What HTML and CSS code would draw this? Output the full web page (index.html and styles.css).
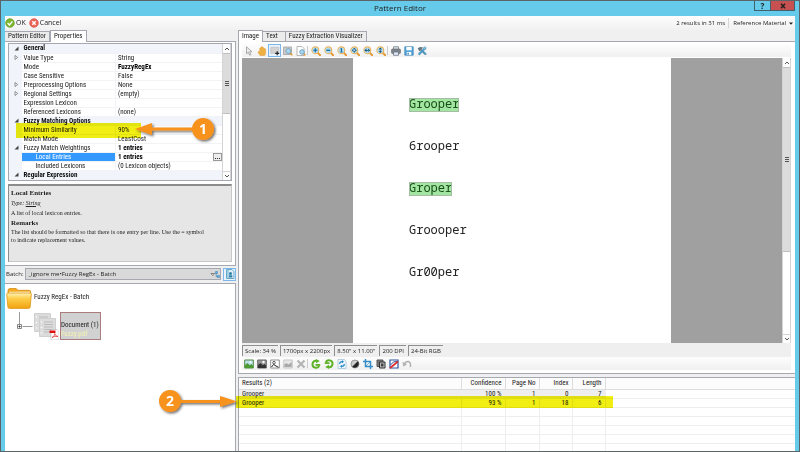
FILE: index.html
```html
<!DOCTYPE html>
<html lang="en">
<head>
<meta charset="utf-8">
<title>Pattern Editor</title>
<link rel="stylesheet" href="styles.css">
</head>
<body>
<svg class="defs" aria-hidden="true">
  <defs>
    <linearGradient id="folderFill" x1="0" y1="0" x2="0" y2="1"><stop offset="0" stop-color="#fff3b8"/><stop offset=".35" stop-color="#fdce4a"/><stop offset="1" stop-color="#f2a312"/></linearGradient>
    <filter id="shade" x="-20%" y="-40%" width="150%" height="200%"><feDropShadow dx="1.5" dy="1.5" stdDeviation="0.8" flood-color="#222" flood-opacity=".65"/></filter>
  </defs>
  <symbol id="lens" viewBox="0 0 10 10">
    <path d="M6.6 6.6 9.2 9.2" stroke="#e39a35" stroke-width="2" stroke-linecap="round"/>
    <circle cx="4.3" cy="4.3" r="3.4" fill="#d3ecf8" stroke="#e8b45c" stroke-width="1.1"/>
    <circle cx="4.3" cy="4.3" r="2.6" fill="#a9d6ee"/>
  </symbol>
  <symbol id="page" viewBox="0 0 17 19">
    <path d="M.5.5h16v18H.5z" fill="#dcdcdc" stroke="#d0d0d0"/>
    <path d="M5 4h9M5 6.500h9M5 9h9M5 11.500h9M5 14h6" stroke="#bcbcbc"/>
    <circle cx="2.500" cy="4" r=".8" fill="#fff"/><circle cx="2.500" cy="9.500" r=".8" fill="#fff"/><circle cx="2.500" cy="15" r=".8" fill="#fff"/>
  </symbol>
</svg>

<div class="window">
  <header class="titlebar">
    <h1>Pattern Editor</h1>
    <div class="caption-buttons">
      <button class="caption help" type="button">?</button>
      <button class="caption close" type="button" aria-label="Close"><svg viewBox="0 0 6 6"><path d="M1 .7 5 5.300M5 .7 1 5.300" stroke="#222" stroke-width="1.500"/></svg></button>
    </div>
  </header>

  <div class="client">
    <div class="commands">
      <button class="command" type="button"><svg viewBox="0 0 10 10"><circle cx="5" cy="5" r="4.300" fill="#7db72f" stroke="#5c981c" stroke-width=".7"/><path d="M2.600 5 4.400 6.900 7.500 3.400" fill="none" stroke="#fff" stroke-width="1.400"/></svg>OK</button>
      <button class="command" type="button"><svg viewBox="0 0 10 10"><circle cx="5" cy="5" r="4.300" fill="#ed6558" stroke="#d84d42" stroke-width=".7"/><path d="M3.300 3.300 6.700 6.700M6.700 3.300 3.300 6.700" stroke="#fff" stroke-width="1.400"/></svg>Cancel</button>
      <span class="timing">2 results in 31 ms</span>
      <button class="command reference" type="button">Reference Material <svg class="caret" viewBox="0 0 4 3"><path d="M0 .5h4L2 2.700z" fill="#222"/></svg></button>
    </div>

    <div class="panes">
      <section class="left">
        <nav class="tabs">
          <button class="tab" type="button">Pattern Editor</button>
          <button class="tab active" type="button">Properties</button>
        </nav>
        <div class="properties-page">
          <div class="grid-box">
            <table class="properties">
              <colgroup><col class="mark-column"><col class="label-column"><col></colgroup>
              <tr class="category"><td class="mark"><svg viewBox="0 0 5 5"><path d="M4.500.5v4h-4z" fill="#444"/></svg></td><th colspan="2">General</th></tr>
              <tr><td class="mark"><svg viewBox="0 0 5 5"><path d="M1 .5 3.700 2.500 1 4.500z" fill="#fff" stroke="#666" stroke-width=".7"/></svg></td><th>Value Type</th><td>String</td></tr>
              <tr><td class="mark"></td><th>Mode</th><td class="set">FuzzyRegEx</td></tr>
              <tr><td class="mark"></td><th>Case Sensitive</th><td>False</td></tr>
              <tr><td class="mark"><svg viewBox="0 0 5 5"><path d="M1 .5 3.700 2.500 1 4.500z" fill="#fff" stroke="#666" stroke-width=".7"/></svg></td><th>Preprocessing Options</th><td>None</td></tr>
              <tr><td class="mark"><svg viewBox="0 0 5 5"><path d="M1 .5 3.700 2.500 1 4.500z" fill="#fff" stroke="#666" stroke-width=".7"/></svg></td><th>Regional Settings</th><td>(empty)</td></tr>
              <tr><td class="mark"></td><th>Expression Lexicon</th><td></td></tr>
              <tr><td class="mark"></td><th>Referenced Lexicons</th><td>(none)</td></tr>
              <tr class="category"><td class="mark"><svg viewBox="0 0 5 5"><path d="M4.500.5v4h-4z" fill="#444"/></svg></td><th colspan="2">Fuzzy Matching Options</th></tr>
              <tr><td class="mark"></td><th>Minimum Similarity</th><td>90%</td></tr>
              <tr><td class="mark"></td><th>Match Mode</th><td>LeastCost</td></tr>
              <tr><td class="mark"><svg viewBox="0 0 5 5"><path d="M4.500.5v4h-4z" fill="#444"/></svg></td><th>Fuzzy Match Weightings</th><td class="set">1 entries</td></tr>
              <tr><td class="mark"></td><th class="child selected">Local Entries</th><td class="set"><div class="value">1 entries <button class="browse" type="button">...</button></div></td></tr>
              <tr><td class="mark"></td><th class="child">Included Lexicons</th><td>(0 Lexicon objects)</td></tr>
              <tr class="category"><td class="mark"><svg viewBox="0 0 5 5"><path d="M4.500.5v4h-4z" fill="#444"/></svg></td><th colspan="2">Regular Expression</th></tr>
            </table>
            <div class="scrollbar">
              <span class="arrow"><svg viewBox="0 0 6 4"><path d="M1 3 3 1 5 3" fill="none" stroke="#555"/></svg></span>
              <span class="thumb upper"><svg viewBox="0 0 4 5"><path d="M0 .5h4M0 2.500h4M0 4.500h4" stroke="#555"/></svg></span>
              <span class="arrow down"><svg viewBox="0 0 6 4"><path d="M1 1 3 3 5 1" fill="none" stroke="#555"/></svg></span>
            </div>
            <div class="marker similarity"></div>
          </div>
          <div class="description">
            <h2>Local Entries</h2>
            <p class="type">Type: <u>String</u></p>
            <p>A list of local lexicon entries.</p>
            <h2>Remarks</h2>
            <p>The list should be formatted so that there is one entry per line. Use the = symbol to indicate replacement values.</p>
          </div>
        </div>
        <div class="batch">
          <label for="batch">Batch:</label>
          <div class="combo">
            <select id="batch"><option>_ignore me•Fuzzy RegEx - Batch</option></select>
            <svg class="combo-icon" viewBox="0 0 9 7"><path d="M.5 2.500h3.600L2.300 4.700z" fill="#fff" stroke="#555" stroke-width=".7"/><path d="M5 .5h2v2H5zM7 4.500h2v2H7z" fill="#65aede" stroke="#2e7fb5" stroke-width=".5"/><path d="M5.700 2.500v3.200H7" fill="none" stroke="#2e7fb5" stroke-width=".7"/></svg>
          </div>
          <button class="tool checked" type="button" aria-label="View batch"><svg viewBox="0 0 10 10"><path d="M1.500.5H7l2 2v7H1.500z" fill="#ddeef7" stroke="#67a9cb"/><path d="M2 1h2v8H2z" fill="#a5cfe3"/><circle cx="5.500" cy="4.500" r="1.500" fill="#2f7fa8"/><path d="M4 8.500V6.300h3.300v2.200z" fill="#2f7fa8"/></svg></button>
        </div>
        <div class="tree">
          <div class="node">
            <svg class="folder" viewBox="0 0 26 22"><path d="M2 3.500Q2 1.500 4 1.500h6l2 1.800h11q1.700 0 1.700 2V10H2z" fill="#f5aa1d" stroke="#cf8510" stroke-width=".7"/><path d="M3 4.700h21V9H3z" fill="#fff7dc"/><path d="M.7 7.300Q.6 6 2 6h22q1.400 0 1.300 1.300L24.200 20q-.2 1.400-1.700 1.400h-19Q2 21.400 1.900 20z" fill="url(#folderFill)" stroke="#dd9716" stroke-width=".8"/></svg>
            <span>Fuzzy RegEx - Batch</span>
          </div>
          <div class="node child-node">
            <svg class="branch" viewBox="0 0 17 28"><path d="M3.500 0v12M6.500 14.500h10" stroke="#999"/><path d="M1.500 12.500h4v4h-4z" fill="#fff" stroke="#888"/><path d="M2.500 14.500h2M3.500 13.500v2" stroke="#333"/></svg>
            <svg class="pages" viewBox="0 0 25 28"><use href="#page" x="0" y="1" width="17" height="19"/><use href="#page" x="5" y="6" width="17" height="19"/><path d="M17 17.500h6l2 2V28h-8z" fill="#fff" stroke="#aaa" stroke-width=".5"/><path d="M15.500 18.500h6v2.500h-6z" fill="#e01010"/><path d="M18 25.500Q21 24 20.700 21.500 21 24 24 24.500 20.500 23.800 18 25.500z" fill="none" stroke="#e23030" stroke-width=".7"/></svg>
            <div class="document"><span>Document (1)</span><span class="file">Fuzzy.pdf</span></div>
          </div>
        </div>
      </section>

      <section class="right">
        <nav class="tabs">
          <button class="tab active" type="button">Image</button>
          <button class="tab wide" type="button">Text</button>
          <button class="tab" type="button">Fuzzy Extraction Visualizer</button>
        </nav>
        <div class="viewer">
          <div class="toolbar">
            <button class="tool" type="button" aria-label="Pointer"><svg viewBox="0 0 10 10"><path d="M2.500.8v7l1.800-1.600 1.300 3 1.300-.6-1.300-2.900h2.300z" fill="#eee" stroke="#999" stroke-width=".8"/></svg></button>
            <button class="tool" type="button" aria-label="Pan"><svg viewBox="0 0 10 10"><path d="M3 9.500.8 6q.6-1.200 1.900 0V2.300q.8-.8 1.200 0V1.200q.8-.8 1.200 0 .8-.8 1.200.2v1q.9-.7 1.200.3.800-.6 1.100.4v3.600q0 1.700-1.100 2.800z" fill="#eeb043" stroke="#e09a35" stroke-width=".5"/></svg></button>
            <button class="tool checked" type="button" aria-label="Select region"><svg viewBox="0 0 10 10"><path d="M.8 1.300h8v6h-8z" fill="#d4d4d4" stroke="#b6b6b6" stroke-width=".6"/><path d="M7.200 5.300v4M5.200 7.300h4" stroke="#222" stroke-width="1.200"/></svg></button>
            <button class="tool" type="button" aria-label="Zoom region"><svg viewBox="0 0 10 10"><path d="M.5 1h8v7.500h-8z" fill="#ccc" stroke="#999" stroke-width=".7"/><path d="m7 7 2.300 2.300" stroke="#e39a35" stroke-width="1.500"/><circle cx="5.300" cy="5" r="2.500" fill="#a9d6ee" stroke="#6f9bb3" stroke-width=".8"/></svg></button>
            <button class="tool" type="button" aria-label="Inspect page"><svg viewBox="0 0 10 10"><path d="M1 .5h5l2 2v7H1z" fill="#fff" stroke="#999" stroke-width=".7"/><path d="m7.500 7.500 1.900 1.900" stroke="#e39a35" stroke-width="1.500"/><circle cx="6" cy="6" r="2.300" fill="#a9d6ee" stroke="#5a9abd" stroke-width=".8"/></svg></button>
            <span class="divider"></span>
            <button class="tool" type="button" aria-label="Zoom in"><svg viewBox="0 0 10 10"><use href="#lens"/><path d="M2.300 4.300h4M4.300 2.300v4" stroke="#176a9b" stroke-width="1.100"/></svg></button>
            <button class="tool" type="button" aria-label="Zoom out"><svg viewBox="0 0 10 10"><use href="#lens"/><path d="M2.300 4.300h4" stroke="#176a9b" stroke-width="1.200"/></svg></button>
            <button class="tool" type="button" aria-label="Actual size"><svg viewBox="0 0 10 10"><use href="#lens"/><path d="M3.400 3 4.500 2.300v3.500M3.300 6h2.300" fill="none" stroke="#176a9b"/></svg></button>
            <button class="tool" type="button" aria-label="Zoom to fit"><svg viewBox="0 0 10 10"><use href="#lens"/><path d="M1.800 4.300 3.300 3v2.600zM6.800 4.300 5.300 3v2.600zM4.300 1.800 3 3.300h2.600zM4.300 6.800 3 5.300h2.600z" fill="#124b70"/></svg></button>
            <button class="tool" type="button" aria-label="Fit width"><svg viewBox="0 0 10 10"><use href="#lens"/><path d="M1.500 4.300 3.400 2.600V6zM7.100 4.300 5.200 2.600V6zM3 3.900h2.600v.8H3z" fill="#124b70"/></svg></button>
            <button class="tool" type="button" aria-label="Fit height"><svg viewBox="0 0 10 10"><use href="#lens"/><path d="M4.300 1.500 2.600 3.400H6zM4.300 7.100 2.600 5.200H6zM3.900 3h.8v2.600h-.8z" fill="#124b70"/></svg></button>
            <span class="divider"></span>
            <button class="tool" type="button" aria-label="Print"><svg viewBox="0 0 10 10"><path d="M2.500.7h5v3h-5z" fill="#cfe0ef" stroke="#777" stroke-width=".7"/><rect x=".5" y="3" width="9" height="4.500" rx="1" fill="#7d858c" stroke="#555" stroke-width=".5"/><path d="M2.500 6h5v3.300h-5z" fill="#dcebf7" stroke="#667" stroke-width=".7"/></svg></button>
            <button class="tool" type="button" aria-label="Save"><svg viewBox="0 0 10 10"><path d="M.8.8h8.400v8.400H.8z" fill="#55a5da" stroke="#3380b5" stroke-width=".7"/><path d="M2.300 1h5.400v3.200H2.300zM2.800 6h4.400v3H2.800z" fill="#fff"/><path d="M3.500 6.800h1.300v2H3.500z" fill="#3380b5"/></svg></button>
            <button class="tool" type="button" aria-label="Settings"><svg viewBox="0 0 10 10"><path d="M.7 2.200Q4 .3 6 1.700L4.500 3.200l4.300 4.600-1 1L3.300 4.400l-1 .8z" fill="#68767f"/><path d="M9.300 1.300 7.700 3 6.900 2.300 8.500.8Q6.300.5 6.200 2.700L1 7.800l1.400 1.400L7.400 4q2 .2 1.900-2.700zM5.200 5.500 8.600 9l1-1-3.200-3.300z" fill="#50a4d2" stroke="#337aa1" stroke-width=".3"/></svg></button>
          </div>
          <div class="canvas">
            <div class="sheet">
              <p><mark>Grooper</mark></p>
              <p>6rooper</p>
              <p><mark>Groper</mark></p>
              <p>Groooper</p>
              <p>Gr00per</p>
            </div>
            <div class="scrollbar">
              <span class="arrow"><svg viewBox="0 0 6 4"><path d="M1 3 3 1 5 3" fill="none" stroke="#555"/></svg></span>
              <span class="thumb long"><svg viewBox="0 0 4 5"><path d="M0 .5h4M0 2.500h4M0 4.500h4" stroke="#555"/></svg></span>
              <span class="arrow down"><svg viewBox="0 0 6 4"><path d="M1 1 3 3 5 1" fill="none" stroke="#555"/></svg></span>
            </div>
          </div>
          <div class="status">
            <span>Scale: 34 %</span><span>1700px x 2200px</span><span>8.50" x 11.00"</span><span>200 DPI</span><span>24-Bit RGB</span>
          </div>
          <div class="toolbar">
            <button class="tool" type="button" aria-label="Image"><svg viewBox="0 0 10 10"><path d="M.7 1h8.600v8H.7z" fill="#bde0ee" stroke="#4f8a3d"/><path d="M1 9V6l2.500-2 2.300 2.200L7.500 5 9 6.500V9z" fill="#4c9a34"/><circle cx="6.500" cy="3" r="1" fill="#fff"/></svg></button>
            <button class="tool" type="button" aria-label="Grayscale"><svg viewBox="0 0 10 10"><path d="M.7 1h8.600v8H.7z" fill="#999" stroke="#666"/><path d="M1 9V6l2.500-2 2.300 2.200L7.500 5 9 6.500V9z" fill="#333"/><circle cx="6.500" cy="3" r="1.200" fill="#fff"/></svg></button>
            <button class="tool" type="button" aria-label="Binarize"><svg viewBox="0 0 10 10"><path d="M.7 1h8.600v8H.7z" fill="#fff" stroke="#777" stroke-width=".8"/><path d="m1.500 8 2-2.500L6 7l2.500 1.300" fill="none" stroke="#222"/><circle cx="4" cy="3.700" r="1.300" fill="none" stroke="#333" stroke-width=".8"/></svg></button>
            <button class="tool" type="button" aria-label="Filter"><svg viewBox="0 0 10 10"><path d="M.7 1h8.600v8H.7z" fill="#e7e7e7" stroke="#c9c9c9"/><path d="M1.300 5.500 3.500 4l2 1.500L8.700 3v5H1.300z" fill="#aaa"/></svg></button>
            <button class="tool" type="button" aria-label="Delete"><svg viewBox="0 0 10 10"><path d="m1.500 1.500 7 7M8.500 1.500l-7 7" stroke="#b5b5b5" stroke-width="2.200"/></svg></button>
            <span class="divider"></span>
            <button class="tool" type="button" aria-label="Rotate left"><svg viewBox="0 0 10 10"><path d="M8.300 6.500A3.500 3.500 0 1 1 5.500 1.800" fill="none" stroke="#5fb32a" stroke-width="2"/><path d="M5 0 8.800 2 5 4.200z" fill="#5fb32a"/><path d="M4.500 5h4.700v1.800H4.500z" fill="#5fb32a"/></svg></button>
            <button class="tool" type="button" aria-label="Rotate right"><svg viewBox="0 0 10 10"><path d="M1.700 3.500A3.500 3.500 0 1 1 4.500 8.200" fill="none" stroke="#5fb32a" stroke-width="2"/><path d="M5 10 1.200 8 5 5.800z" fill="#5fb32a"/><path d="M.8 3.200h4.700V5H.8z" fill="#5fb32a"/></svg></button>
            <button class="tool" type="button" aria-label="Refresh"><svg viewBox="0 0 10 10"><path d="M1 .5h6.500l1.500 2v7H1z" fill="#eef7fd" stroke="#9dbed2" stroke-width=".7"/><path d="M2.700 5q0-2.300 2.500-2.300M7.300 5q0 2.300-2.500 2.300" fill="none" stroke="#2688c6" stroke-width="1.200"/><path d="m5 1 2 1.700-2 1.600zM5 5.700 3 7.300 5 9z" fill="#2688c6"/></svg></button>
            <button class="tool" type="button" aria-label="Invert"><svg viewBox="0 0 10 10"><circle cx="5" cy="5" r="4" fill="#ccc" stroke="#888" stroke-width=".8"/><path d="M7.800 2.200A4 4 0 0 1 2.200 7.800z" fill="#222"/></svg></button>
            <button class="tool" type="button" aria-label="Crop"><svg viewBox="0 0 10 10"><path d="M2.500 0v7.500H10M0 2.500h7.500V10" fill="none" stroke="#348ecb" stroke-width="1.500"/><path d="m3 7 4-4" stroke="#348ecb" stroke-width=".6"/></svg></button>
            <button class="tool" type="button" aria-label="Border"><svg viewBox="0 0 10 10"><path d="M1 1h6v6.500H1z" fill="#777" stroke="#555"/><path d="M3.500 3h5.500v6H3.500z" fill="#bbb" stroke="#333"/><path d="M5 4.500h2.500V7.500H5z" fill="#444"/></svg></button>
            <button class="tool" type="button" aria-label="Line removal"><svg viewBox="0 0 10 10"><path d="M1 1h8v8H1z" fill="#fff" stroke="#2d55a0" stroke-width="1.200"/><path d="M1.500 6Q4 1.500 8.500 2.500" fill="none" stroke="#2d55a0"/><path d="m1 9 8-6.500" stroke="#dd2d2d" stroke-width="1.700"/></svg></button>
            <button class="tool" type="button" aria-label="Undo"><svg viewBox="0 0 10 10"><path d="M2 5.500Q3.500 2.300 6.500 2.500 9.300 3.500 8.300 8" fill="none" stroke="#b2b2b2" stroke-width="1.500"/><path d="m.5 2.800.7 4.700L5 5.700z" fill="#b2b2b2"/></svg></button>
          </div>
        </div>
        <div class="results">
          <table>
            <thead><tr><th class="name">Results (2)</th><th class="confidence">Confidence</th><th class="page-no">Page No</th><th class="number">Index</th><th class="number">Length</th><th class="rest"></th></tr></thead>
            <tbody>
              <tr class="first"><td>Grooper</td><td>100 %</td><td>1</td><td>0</td><td>7</td><td></td></tr>
              <tr><td>Grooper</td><td>93 %</td><td>1</td><td>18</td><td>6</td><td></td></tr>
              <tr><td></td><td></td><td></td><td></td><td></td><td></td></tr>
              <tr><td></td><td></td><td></td><td></td><td></td><td></td></tr>
              <tr><td></td><td></td><td></td><td></td><td></td><td></td></tr>
              <tr><td></td><td></td><td></td><td></td><td></td><td></td></tr>
              <tr><td></td><td></td><td></td><td></td><td></td><td></td></tr>
            </tbody>
          </table>
          <div class="marker result"></div>
        </div>
      </section>
    </div>
  </div>

  <svg class="callout one" viewBox="0 0 86 28"><g filter="url(#shade)" fill="#f7921e"><path d="M1 13 18 7v4.500h42v3H18V19z"/><circle cx="69" cy="13" r="11"/></g><text x="69" y="18">1</text></svg>
  <svg class="callout two" viewBox="0 0 84 28"><g filter="url(#shade)" fill="#f7921e"><path d="M79 13.500 62 8v4H20v3h42v4z"/><circle cx="12" cy="13" r="11"/></g><text x="12" y="18">2</text></svg>
</div>
</body>
</html>
```
FILE: styles.css
```css
* { box-sizing: border-box; }

body {
  margin: 0;
  background: #5d6468;
  color: #222;
  font: 7px/9px "Roboto Condensed", "Liberation Sans", sans-serif;
}

h1, h2, p { margin: 0; }

button, select {
  padding: 0;
  border: 0;
  background: none;
  color: inherit;
  font: inherit;
}

svg { display: block; }
.defs { position: absolute; width: 0; height: 0; }
table { border-collapse: collapse; border-spacing: 0; }
td, th { padding: 0; }

/* Window frame */
.window {
  position: relative;
  display: flex;
  flex-direction: column;
  height: 100vh;
  padding: 0 4px;
  border: 1px solid #5d6468;
  background: #66caea;
  overflow: hidden;
}

.titlebar {
  position: relative;
  flex: none;
  height: 15px;
}

.titlebar h1 {
  font: 8px/14px "Open Sans", sans-serif;
  text-align: center;
}

.caption-buttons {
  position: absolute;
  top: 0;
  right: 0;
  display: flex;
}

.caption {
  display: grid;
  place-items: center;
  height: 10px;
  border: 1px solid #40616d;
  border-top: 0;
  font: bold 8px/9px "Open Sans", sans-serif;
}

.help { width: 16px; border-right: 0; }
.close { width: 25px; background: #c75050; }
.close svg { width: 6px; height: 6px; }

.client {
  display: flex;
  flex: 1;
  flex-direction: column;
  min-height: 0;
  background: #f0f0f0;
}

.commands {
  display: flex;
  flex: none;
  align-items: center;
  gap: 3px;
  height: 14px;
  padding-right: 2px;
  background: linear-gradient(#fdfdfd, #f1f1f1);
  font: 7px/10px "Open Sans", sans-serif;
}

.command { display: flex; align-items: center; gap: 1px; }
.command svg { width: 10px; height: 10px; }
.command .caret { width: 4px; height: 3px; margin-left: 2px; }
.timing { margin-left: auto; }
.timing, .reference { font: 6px/10px "Open Sans", sans-serif; }
.reference { padding-left: 4px; border-left: 1px solid #d5d5d5; }

.panes {
  display: grid;
  flex: 1;
  grid-template-columns: 231px 1fr;
  column-gap: 2px;
  min-height: 0;
}

.left, .right {
  display: flex;
  flex-direction: column;
  min-width: 0;
  min-height: 0;
}

/* Tabs */
.tabs {
  display: flex;
  flex: none;
  align-items: flex-end;
  height: 12px;
  border-bottom: 1px solid #a5a8b0;
}

.tab {
  height: 10px;
  padding: 0 3px;
  border: 1px solid #a5a8b0;
  border-bottom: 0;
  border-left: 0;
  background: #ececec;
}

.tab.active {
  height: 12px;
  margin-bottom: -1px;
  border-left: 1px solid #a5a8b0;
  background: #fff;
}

.tab.wide { padding-right: 7px; }

/* Property grid */
.properties-page {
  flex: none;
  padding: 1px 3px 3px;
  border-right: 1px solid #a5a8b0;
  border-bottom: 1px solid #a5a8b0;
  background: #fff;
}

.grid-box {
  position: relative;
  display: flex;
  border: 1px solid #a5a8b0;
  background: #fff;
}

.properties {
  flex: 1;
  table-layout: fixed;
  width: 100%;
}

.mark-column { width: 12px; }
.label-column { width: 94px; }

.properties th, .properties td {
  height: 9px;
  padding-left: 2px;
  border-bottom: 1px solid #f1f3f7;
  font-weight: normal;
  line-height: 8px;
  text-align: left;
  white-space: nowrap;
}

.properties td { border-left: 1px solid #f1f3f7; }
.properties .mark { padding-left: 4px; border-color: #f1f5fb; background: #f1f5fb; }
.properties .mark svg { width: 5px; height: 5px; }
.properties .category th { background: #f1f5fb; color: #111; font-weight: bold; }
.properties .set { color: #000; font-weight: bold; }
.properties .child { padding-left: 14px; }
.properties .selected { background: #3399ff; color: #fff; }
.value { display: flex; align-items: center; justify-content: space-between; }

.browse {
  width: 9px;
  height: 8px;
  border: 1px solid #999;
  background: #eee;
  line-height: 4px;
}

.scrollbar {
  display: flex;
  flex: none;
  flex-direction: column;
  width: 9px;
  background: #fff;
  border: solid #d4d4d4;
  border-width: 0 1px;
}

.scrollbar .arrow {
  display: grid;
  place-items: center;
  height: 9px;
  background: #fdfdfd;
}

.scrollbar .arrow svg { width: 6px; height: 4px; }
.scrollbar .down { margin-top: auto; border-top: 1px solid #d4d4d4; }

.thumb {
  display: grid;
  place-items: center;
  border: solid #c0c0c0;
  border-width: 1px 0;
  background: #dcdcdc;
}

.thumb svg { width: 4px; height: 5px; }
.thumb.upper { height: 61px; }
.thumb.long { flex: 0 0 65%; }

.description {
  height: 78px;
  margin-top: 3px;
  padding: 2px 22px 2px 2px;
  border: 1px solid #c8c8c8;
  border-top: 2px solid #8c8c8c;
  border-left-color: #8c8c8c;
  background: #e6e6e6;
  font: 6px/8px "Liberation Serif", serif;
}

.description h2 { font-size: 7px; line-height: 10px; }
.description p { margin-bottom: 1px; }
.description .type { font-style: italic; line-height: 10px; }

/* Batch selector */
.batch {
  display: flex;
  flex: none;
  align-items: center;
  gap: 2px;
  height: 18px;
  padding-left: 1px;
  border-bottom: 1px solid #a5a8b0;
  font: 6px/10px "Open Sans", sans-serif;
}

.combo { position: relative; flex: 1; }

.combo select {
  display: block;
  width: 100%;
  height: 12px;
  padding-left: 2px;
  border: 1px solid #a5a8b0;
  appearance: none;
  background: #d9d9d9;
}

.combo-icon {
  position: absolute;
  top: 3px;
  right: 1px;
  width: 10px;
  height: 7px;
}

.tree {
  flex: 1;
  padding: 3px 0 0 1px;
  border-right: 1px solid #a5a8b0;
  background: #fff;
}

.node { display: flex; align-items: center; gap: 2px; }
.folder { width: 26px; height: 22px; }
.child-node { align-items: flex-start; gap: 1px; margin-top: 3px; padding-left: 10px; }
.branch { width: 17px; height: 28px; }
.pages { width: 25px; height: 28px; }

.document {
  display: flex;
  flex-direction: column;
  justify-content: flex-end;
  width: 41px;
  height: 28px;
  border: 1px solid #a97d7d;
  background: #d1d1d1;
  white-space: nowrap;
}

.file { color: #f5f3b0; }

/* Image viewer */
.viewer {
  display: flex;
  flex: none;
  flex-direction: column;
  height: 332px;
  padding: 2px 4px 3px 3px;
  border-bottom: 1px solid #a5a8b0;
  border-left: 1px solid #a5a8b0;
  background: #fff;
}

.toolbar {
  display: flex;
  flex: none;
  align-items: center;
  height: 13px;
  background: linear-gradient(#fdfdfd, #f0f0f0);
}

.tool {
  display: grid;
  flex: none;
  place-items: center;
  width: 13px;
  height: 13px;
}

.tool svg { width: 10px; height: 10px; }
.checked { border: 1px solid #7cb6ea; background: #e9f3fc; }
.divider { width: 1px; height: 9px; margin-right: 1px; background: #ccc; }

.canvas {
  display: flex;
  flex: 1;
  min-height: 0;
  margin-top: 1px;
  background: #a0a0a0;
}

.sheet {
  width: 318px;
  margin: 0 auto;
  padding: 39px 0 0 56px;
  background: #fff;
  color: #222;
  font: 12px/14px "Noto Sans Mono", "DejaVu Sans Mono", monospace;
}

.sheet p { height: 42px; }

mark {
  display: inline-block;
  height: 14px;
  background: #a2e6a2;
  color: #174d17;
  line-height: 12px;
  outline: 1px solid #a4bda4;
  outline-offset: -1px;
}

.status {
  display: flex;
  flex: none;
  gap: 2px;
  height: 14px;
  padding: 2px 0 1px;
  background: #efefef;
  font: 6px/10px "Open Sans", sans-serif;
}

.status span {
  padding: 0 2px;
  border-top: 1px solid #8f8f8f;
  border-left: 1px solid #8f8f8f;
}

/* Results */
.results {
  position: relative;
  flex: 1;
  min-height: 0;
  margin-top: 3px;
  border-top: 1px solid #a5a8b0;
  border-left: 1px solid #a5a8b0;
  background: #fff;
}

.results table { table-layout: fixed; width: 100%; }

.results th, .results td {
  height: 9px;
  padding: 0 3px;
  border-right: 1px solid #eee;
  border-bottom: 1px solid #eee;
  font-weight: normal;
  line-height: 8px;
  text-align: right;
  white-space: nowrap;
}

.results th { height: 11px; border-color: #ddd; background: #fcfcfc; }
.results th:first-child, .results td:first-child { text-align: left; }
.results .name { width: 222px; }
.results .confidence { width: 44px; }
.results .page-no { width: 34px; }
.results .number { width: 33px; }
.results td:last-child, .results th:last-child { border-right: 0; }
.first td:not(:last-child) { background: #eee; }

/* Highlighter strokes and numbered callouts */
.marker { position: absolute; background: #f0ee12; mix-blend-mode: multiply; }
.similarity { top: 79px; left: 7px; width: 125px; height: 15px; }
.result { top: 18px; left: -3px; width: 377px; height: 12px; }

.callout { position: absolute; }
.one { top: 115px; left: 133px; width: 86px; height: 28px; }
.two { top: 387px; left: 157px; width: 84px; height: 28px; }

.callout text {
  fill: #fff;
  font: bold 14px "Open Sans", sans-serif;
  text-anchor: middle;
}
```
